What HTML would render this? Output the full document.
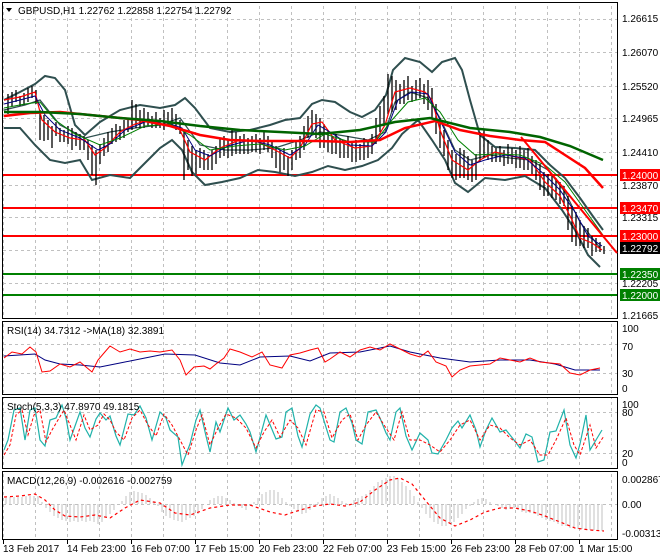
<!DOCTYPE html>
<html><head><meta charset="utf-8"><style>
html,body{margin:0;padding:0;background:#fff;width:660px;height:560px;overflow:hidden}
svg{display:block;font-family:"Liberation Sans",sans-serif;font-size:10px}
</style></head><body>
<svg width="660" height="560" viewBox="0 0 660 560" xmlns="http://www.w3.org/2000/svg">
<defs>
<pattern id="vg" x="35" y="0" width="32" height="560" patternUnits="userSpaceOnUse"><line x1="0.5" y1="0" x2="0.5" y2="560" stroke="#c0c0c0" stroke-dasharray="3,3"/></pattern>
</defs>
<!-- vertical grid -->
<g stroke="#c0c0c0" stroke-dasharray="3,3">
<rect x="3" y="3" width="614" height="536" fill="url(#vg)" stroke="none"/>
<!-- main horizontals -->
<line x1="3" x2="617" y1="19.5" y2="19.5"/><line x1="3" x2="617" y1="52.5" y2="52.5"/><line x1="3" x2="617" y1="86.5" y2="86.5"/><line x1="3" x2="617" y1="118.5" y2="118.5"/><line x1="3" x2="617" y1="152.5" y2="152.5"/><line x1="3" x2="617" y1="185.5" y2="185.5"/><line x1="3" x2="617" y1="217.5" y2="217.5"/><line x1="3" x2="617" y1="250.5" y2="250.5"/><line x1="3" x2="617" y1="283.5" y2="283.5"/>
<line x1="3" x2="617" y1="344.5" y2="344.5"/><line x1="3" x2="617" y1="373.5" y2="373.5"/>
<line x1="3" x2="617" y1="412.5" y2="412.5"/><line x1="3" x2="617" y1="453.5" y2="453.5"/>
<line x1="3" x2="617" y1="504.5" y2="504.5"/>
</g>
<!-- panel separators: white gaps -->
<rect x="0" y="319" width="660" height="2" fill="#fff"/>
<rect x="0" y="395" width="660" height="2" fill="#fff"/>
<rect x="0" y="469" width="660" height="2" fill="#fff"/>
<g fill="none" stroke="#000" stroke-width="1">
<rect x="2.5" y="2.5" width="615" height="316"/>
<rect x="2.5" y="321.5" width="615" height="73"/>
<rect x="2.5" y="397.5" width="615" height="71"/>
<rect x="2.5" y="471.5" width="615" height="68"/>
</g>
<!-- horizontal levels -->
<g stroke-width="2">
<line x1="3" x2="617" y1="175" y2="175" stroke="#ff0000"/>
<line x1="3" x2="617" y1="208" y2="208" stroke="#ff0000"/>
<line x1="3" x2="617" y1="236" y2="236" stroke="#ff0000"/>
<line x1="3" x2="617" y1="274" y2="274" stroke="#008000"/>
<line x1="3" x2="617" y1="295" y2="295" stroke="#008000"/>
</g>
<!-- bollinger -->
<g fill="none" stroke="#2f4f4f" stroke-width="2">
<polyline points="4,100 20,92 35,84 45,76 55,78 65,90 75,125 85,135 100,122 120,110 140,105 160,108 175,105 185,98 195,108 210,128 230,132 250,130 270,125 285,120 300,118 312,104 322,100 335,102 350,112 362,117 375,110 386,95 393,70 405,58 420,62 432,72 442,62 455,58 462,70 470,100 480,135 495,147 515,148 535,150 550,165 565,178 580,198 592,215 603,230"/>
<polyline points="4,128 20,128 35,145 50,160 65,163 80,160 92,180 110,175 130,178 148,160 160,148 172,140 182,150 192,172 205,185 222,182 240,178 258,170 275,172 295,176 312,172 328,166 345,170 362,166 378,160 392,148 402,134 418,120 432,140 445,160 455,183 468,192 485,178 505,180 525,176 545,188 562,210 575,230 588,255 600,267"/>
<polyline points="4,110 25,105 40,100 60,125 85,138 110,132 135,128 160,125 180,118 200,145 225,150 250,150 275,148 300,140 320,132 345,136 368,140 385,132 395,102 410,92 428,98 440,118 455,150 470,160 490,155 510,158 530,160 548,170 565,192 580,222 600,248" stroke-width="1.2"/>
</g>
<!-- candles (approx) -->
<g fill="none" stroke="#000" stroke-width="1.3">
<path d="M8,94v20M12,92v14M16,90v12M20,96v10M24,93v12M28,88v14M32,86v12M36,90v14M40,110v30M44,115v26M48,120v20M52,126v22M56,122v14M60,128v14M64,130v12M68,126v18M72,128v22M76,132v14M80,134v16M84,136v14M88,140v20M92,145v30M96,150v35M100,144v20M104,138v18M108,132v20M112,128v16M116,124v18M120,126v14M124,120v18M128,118v14M132,100v30M136,104v24M140,110v18M144,108v20M148,112v14M152,116v12M156,112v16M160,118v10M164,110v20M168,112v14M172,108v18M176,114v16M180,120v14M184,130v50M188,140v30M192,146v30M196,150v24M200,148v20M204,150v20M208,154v16M212,150v20M216,146v18M220,138v20M224,136v20M228,140v18M232,130v26M236,132v22M240,136v18M244,134v20M248,138v16M252,136v16M256,134v18M260,138v16M264,132v18M268,136v16M272,140v18M276,146v22M280,150v22M284,148v22M288,156v20M292,150v20M296,140v20M300,136v22M304,126v24M308,116v22M312,110v24M316,114v24M320,118v30M324,124v24M328,130v22M332,136v18M336,134v20M340,138v20M344,140v18M348,136v22M352,142v20M356,140v22M360,144v16M364,138v22M368,140v18M372,134v20M376,118v26M380,106v26M384,96v30M388,74v40M392,76v36M396,80v30M400,84v20M404,80v24M408,76v24M412,86v16M416,80v20M420,78v20M424,84v20M428,80v30M432,88v30M436,104v30M440,118v30M444,130v26M448,140v30M452,150v28M456,154v26M460,148v30M464,150v28M468,156v24M472,160v22M476,154v26M480,132v30M484,130v28M488,140v20M492,146v16M496,148v14M500,146v16M504,150v16M508,144v20M512,148v16M516,150v18M520,146v22M524,150v20M528,148v22M532,156v18M536,160v20M540,164v26M544,172v24M548,174v22M552,176v22M556,178v22M560,182v22M564,186v20M568,196v34M572,206v36M576,212v34M580,220v26M584,226v22M588,228v20M592,236v20M596,238v14M600,242v10M604,246v8"/>
</g>
<!-- fast MAs -->
<g fill="none">
<polyline stroke="#ff0000" stroke-width="1.2" points="4,100 20,97 35,92 42,120 55,132 70,138 85,140 95,155 105,148 120,132 135,124 150,120 165,122 180,130 190,152 205,160 220,148 240,140 258,142 275,150 290,158 300,148 312,124 322,122 335,140 355,148 372,146 385,125 395,92 410,88 425,92 432,100 440,130 452,160 468,170 480,160 495,152 512,156 530,160 545,182 560,196 572,220 580,238 592,243 602,250"/>
<polyline stroke="#000080" stroke-width="1" points="4,104 20,100 35,96 45,115 60,130 80,138 98,150 110,144 125,130 145,122 165,122 182,128 195,150 210,156 228,146 250,140 270,145 290,155 305,145 318,125 330,132 350,145 372,146 386,132 398,100 412,92 428,94 440,120 455,152 470,165 485,160 505,155 525,158 545,175 560,190 575,212 588,236 602,246"/>
<polyline stroke="#008000" stroke-width="1" points="4,108 25,104 40,102 55,120 75,134 100,145 120,138 145,126 170,124 190,135 210,150 235,146 260,144 285,150 305,146 325,134 350,142 375,142 392,120 408,102 425,98 440,112 458,140 475,155 495,154 520,155 545,165 565,182 585,210 605,238"/>
<polyline stroke="#ff0000" stroke-width="2.5" points="4,116 30,113 60,112 100,116 140,120 170,126 200,135 230,140 260,141 290,141 320,141 350,142 380,140 405,128 435,121 460,130 490,136 520,140 545,142 565,155 585,168 603,188"/>
<polyline stroke="#006400" stroke-width="2.5" points="4,112 40,112 80,114 120,118 160,121 200,126 240,130 280,132 320,134 360,130 395,122 430,118 470,128 510,132 540,137 570,146 603,160"/>
<line x1="521" y1="137" x2="617" y2="253" stroke="#ff0000" stroke-width="2"/>
</g>
<!-- RSI -->
<polyline fill="none" stroke="#000080" stroke-width="1" points="4,356 35,354 45,360 60,364 80,365 100,367 120,363 140,359 165,354 195,355 220,363 240,365 260,357 290,356 310,361 330,353 360,352 390,346 410,352 440,358 470,362 500,360 530,360 555,364 575,370 600,370"/>
<polyline fill="none" stroke="#ff0000" stroke-width="1" points="4,358 12,352 22,354 30,347 36,352 42,372 50,371 60,364 70,367 80,362 92,372 98,360 104,353 110,346 120,352 130,349 140,352 150,351 160,352 172,350 180,360 186,375 194,367 204,366 210,369 216,364 224,358 230,349 240,352 252,357 262,352 270,365 282,368 290,355 300,353 310,350 318,348 325,362 330,359 340,352 350,357 360,350 370,347 380,350 390,344 400,349 410,354 420,357 428,351 436,362 446,366 452,377 460,370 470,366 480,365 490,364 500,358 510,360 520,362 530,358 540,362 560,364 570,373 580,375 590,370 600,368"/>
<!-- Stoch -->
<polyline fill="none" stroke="#20b2aa" stroke-width="1.2" points="4,450 8,440 14,410 20,408 25,440 30,410 35,408 40,440 45,446 50,420 56,418 62,405 66,418 70,440 80,412 85,428 90,437 96,419 100,413 106,420 110,416 116,436 120,445 128,414 134,415 140,406 146,418 152,440 160,412 166,418 170,430 178,437 182,465 190,444 196,420 200,410 206,436 210,452 216,422 220,432 228,408 234,420 240,415 246,424 250,432 256,452 262,430 266,415 276,439 282,437 286,412 292,408 298,436 302,447 310,414 316,405 320,408 330,440 334,442 340,412 346,408 352,423 356,440 362,444 368,412 376,410 380,418 386,433 390,440 396,412 400,408 406,436 412,450 420,433 428,440 432,453 438,454 446,440 452,428 458,421 462,428 470,415 476,430 480,447 486,430 492,418 500,432 506,430 514,440 520,448 526,434 532,437 538,462 544,460 550,432 556,431 564,410 570,445 576,458 580,444 586,415 590,450 596,440 602,430"/>
<polyline fill="none" stroke="#ff0000" stroke-width="1" stroke-dasharray="3,2" points="4,455 10,445 16,415 22,410 28,435 34,415 40,410 46,442 52,430 58,420 64,410 70,425 76,440 84,415 90,430 98,425 104,414 110,420 116,432 124,440 132,418 140,410 148,425 156,436 164,414 172,425 180,440 188,455 196,430 202,415 210,445 218,428 226,414 236,418 246,428 256,448 264,432 272,420 280,437 290,420 298,428 306,445 316,410 324,412 332,438 342,420 350,414 358,440 366,425 376,412 384,425 394,440 402,412 410,440 420,440 430,445 440,452 450,440 460,425 470,420 480,440 490,425 500,428 510,438 520,445 530,440 540,455 548,455 556,440 566,418 574,445 580,455 590,425 596,448 604,436"/>
<!-- MACD -->
<g stroke="#c0c0c0" stroke-width="1">
<path d="M6,504v-7M10,504v-7M14,504v-7M18,504v-7M22,504v-7M26,504v-8M30,504v-8M34,504v-8M38,504v-8M42,504v-2M46,504v4M50,504v8M54,504v12M58,504v14M62,504v16M66,504v17M70,504v18M74,504v17M78,504v18M82,504v17M86,504v18M90,504v17M94,504v18M98,504v20M102,504v18M106,504v14M110,504v10M114,504v6M118,504v1M122,504v-3M126,504v-8M130,504v-12M134,504v-13M138,504v-12M142,504v-11M146,504v-9M150,504v-6M154,504v-3M158,504v2M162,504v8M166,504v12M170,504v14M174,504v16M178,504v17M182,504v18M186,504v16M190,504v14M194,504v12M198,504v10M202,504v5M206,504v0M210,504v-4M214,504v-6M218,504v-8M222,504v-8M226,504v-6M230,504v-4M234,504v-1M238,504v2M242,504v4M246,504v6M250,504v2M254,504v-2M258,504v-6M262,504v-10M266,504v-12M270,504v-14M274,504v-14M278,504v-12M282,504v-6M286,504v-2M290,504v2M294,504v5M298,504v8M302,504v10M306,504v9M310,504v6M314,504v2M318,504v-2M322,504v-6M326,504v-8M330,504v-10M334,504v-8M338,504v-6M342,504v-3M346,504v-1M350,504v1M354,504v-4M358,504v-6M362,504v-8M366,504v-10M370,504v-14M374,504v-18M378,504v-22M382,504v-24M386,504v-26M390,504v-28M394,504v-28M398,504v-26M402,504v-22M406,504v-18M410,504v-14M414,504v-8M418,504v-2M422,504v4M426,504v10M430,504v14M434,504v18M438,504v20M442,504v22M446,504v22M450,504v20M454,504v18M458,504v14M462,504v10M466,504v5M470,504v2M474,504v-2M478,504v-5M482,504v-6M486,504v-5M490,504v-2M494,504v0M498,504v2M502,504v4M506,504v6M510,504v5M514,504v4M518,504v6M522,504v8M526,504v9M530,504v9M534,504v10M538,504v12M542,504v14M546,504v16M550,504v17M554,504v18M558,504v20M562,504v22M566,504v22M570,504v24M574,504v24M578,504v25M582,504v25M586,504v26M590,504v26M594,504v26M598,504v26M602,504v27"/>
</g>
<polyline fill="none" stroke="#ff0000" stroke-width="1.2" stroke-dasharray="3,3" points="4,497 20,496 35,494 45,500 55,510 65,516 80,517 95,515 110,518 125,508 140,500 160,503 175,513 190,515 210,508 230,505 250,505 270,512 285,515 300,510 315,506 330,504 345,506 360,502 375,490 390,480 400,478 412,484 425,500 440,518 455,526 470,520 485,512 500,508 515,508 530,511 545,516 560,522 575,528 590,530 604,531"/>
<!-- title & labels -->
<path d="M6,8 L12,8 L9,12 Z" fill="#000"/>
<text x="18" y="14" fill="#000">GBPUSD,H1  1.22762 1.22858 1.22754 1.22792</text>
<text x="7" y="334" fill="#000">RSI(14) 34.7312  -&gt;MA(18) 32.3891</text>
<text x="7" y="410" fill="#000">Stoch(5,3,3) 47.8970 49.1815</text>
<text x="7" y="484" fill="#000">MACD(12,26,9) -0.002616 -0.002759</text>
<g fill="#000">
<text x="622" y="22">1.26615</text><text x="622" y="56">1.26070</text><text x="622" y="90">1.25520</text><text x="622" y="122">1.24965</text><text x="622" y="156">1.24410</text><text x="622" y="189">1.23870</text><text x="622" y="221">1.23315</text><text x="622" y="287">1.22205</text><text x="622" y="319">1.21665</text>
<text x="622" y="332">100</text><text x="622" y="350">70</text><text x="622" y="377">30</text><text x="622" y="392">0</text>
<text x="622" y="408">100</text><text x="622" y="416">80</text><text x="622" y="457">20</text><text x="622" y="466">0</text>
<text x="622" y="483">0.002867</text><text x="622" y="508">0.00</text><text x="622" y="537">-0.003139</text>
</g>
<g font-size="10">
<rect x="620" y="169" width="40" height="12" fill="#ff0000"/><text x="622" y="179" fill="#fff">1.24000</text>
<rect x="620" y="202" width="40" height="12" fill="#ff0000"/><text x="622" y="212" fill="#fff">1.23470</text>
<rect x="620" y="230" width="40" height="12" fill="#ff0000"/><text x="622" y="240" fill="#fff">1.23000</text>
<rect x="620" y="242" width="40" height="12" fill="#000"/><text x="622" y="252" fill="#fff">1.22792</text>
<rect x="620" y="268" width="40" height="12" fill="#008000"/><text x="622" y="278" fill="#fff">1.22350</text>
<rect x="620" y="289" width="40" height="12" fill="#008000"/><text x="622" y="299" fill="#fff">1.22000</text>
</g>
<g fill="#000">
<text x="3" y="552">13 Feb 2017</text><text x="67" y="552">14 Feb 23:00</text><text x="131" y="552">16 Feb 07:00</text><text x="195" y="552">17 Feb 15:00</text><text x="259" y="552">20 Feb 23:00</text><text x="323" y="552">22 Feb 07:00</text><text x="387" y="552">23 Feb 15:00</text><text x="451" y="552">26 Feb 23:00</text><text x="515" y="552">28 Feb 07:00</text><text x="579" y="552">1 Mar 15:00</text>
</g>
<g stroke="#000"><line x1="3.5" y1="540" x2="3.5" y2="544"/><line x1="67.5" y1="540" x2="67.5" y2="544"/><line x1="131.5" y1="540" x2="131.5" y2="544"/><line x1="195.5" y1="540" x2="195.5" y2="544"/><line x1="259.5" y1="540" x2="259.5" y2="544"/><line x1="323.5" y1="540" x2="323.5" y2="544"/><line x1="387.5" y1="540" x2="387.5" y2="544"/><line x1="451.5" y1="540" x2="451.5" y2="544"/><line x1="515.5" y1="540" x2="515.5" y2="544"/><line x1="579.5" y1="540" x2="579.5" y2="544"/></g>
</svg>
</body></html>
